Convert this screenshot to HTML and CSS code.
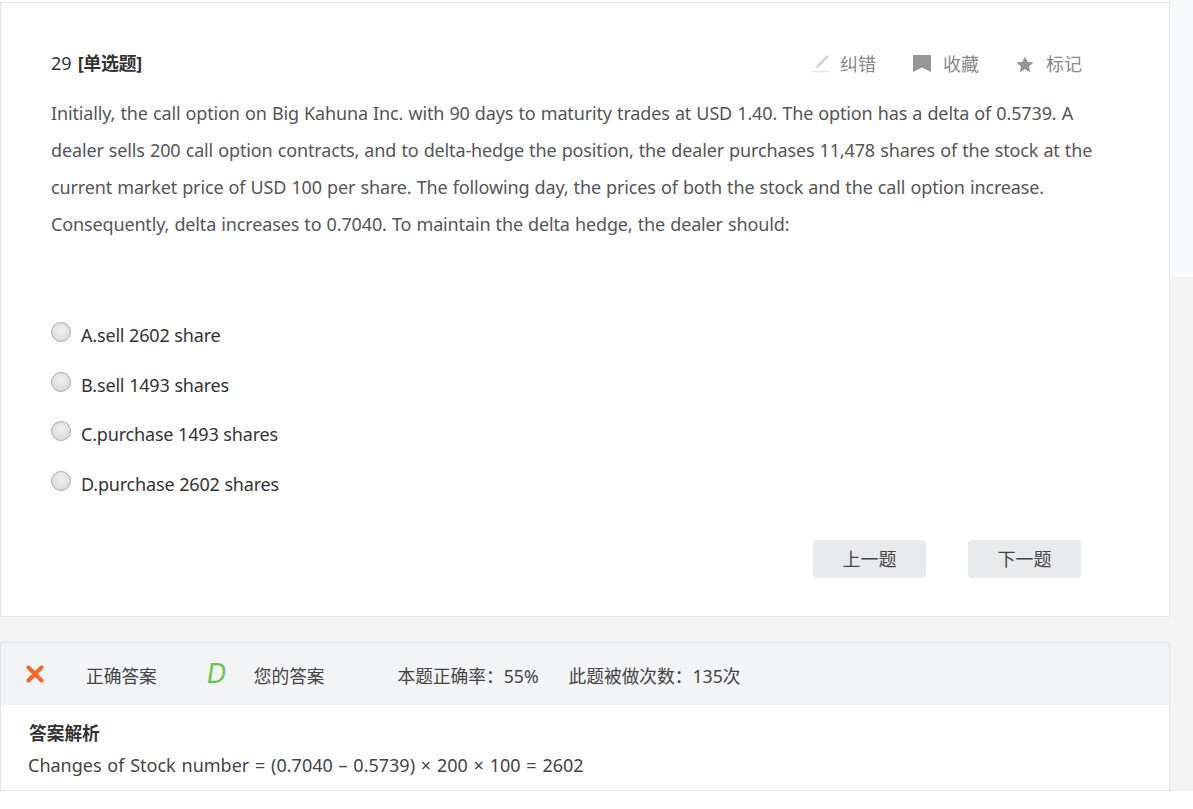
FILE: index.html
```html
<!DOCTYPE html>
<html lang="zh-CN">
<head>
<meta charset="utf-8">
<title>题目</title>
<link rel="stylesheet" href="styles.css">
</head>
<body>
<div class="page">
  <main class="main">
    <section class="card question">
      <header class="q-head">
        <div class="q-num">29 <b>[单选题]</b></div>
        <div class="q-tools">
          <span class="tool tool-fix"><svg class="ico" width="20" height="20" viewBox="0 0 20 20"><path d="M17 2l2 2-10 10-3.800 1.800 1.600-3.800z" fill="#d6d6d6"/><path d="M2 18.500h18" stroke="#e8e8e8" stroke-width="1.600"/></svg>纠错</span>
          <span class="tool tool-fav"><svg class="ico" width="20" height="20" viewBox="0 0 20 20"><path d="M0 2h18v17l-9-4.500-9 4.500z" fill="#969696"/></svg>收藏</span>
          <span class="tool tool-mark"><svg class="ico" width="20" height="20" viewBox="0 0 20 20"><path d="M9 3.500l2.500 5.300 6 .6-4.500 4 1.300 5.800-5.300-3-5.300 3 1.300-5.800-4.500-4 6-.6z" fill="#969696"/></svg>标记</span>
        </div>
      </header>
      <p class="stem">Initially, the call option on Big Kahuna Inc. with 90 days to maturity trades at USD 1.40. The option has a delta of 0.5739. A dealer sells 200 call option contracts, and to delta-hedge the position, the dealer purchases 11,478 shares of the stock at the current market price of USD 100 per share. The following day, the prices of both the stock and the call option increase. Consequently, delta increases to 0.7040. To maintain the delta hedge, the dealer should:</p>
      <ul class="options">
        <li class="option"><span class="radio"></span><span>A.sell 2602 share</span></li>
        <li class="option"><span class="radio"></span><span>B.sell 1493 shares</span></li>
        <li class="option"><span class="radio"></span><span>C.purchase 1493 shares</span></li>
        <li class="option"><span class="radio"></span><span>D.purchase 2602 shares</span></li>
      </ul>
      <div class="nav">
        <button class="btn">上一题</button>
        <button class="btn">下一题</button>
      </div>
    </section>
    <section class="card answer">
      <div class="ans-bar">
        <svg class="ans-x" width="18" height="18" viewBox="0 0 18 18"><path d="M2.500 2.500l13 13M15.500 2.500l-13 13" stroke="#f4672c" stroke-width="4" stroke-linecap="round"/></svg>
        <span class="ans-label">正确答案</span>
        <span class="ans-letter">D</span>
        <span class="ans-label ans-yours">您的答案</span>
        <span class="ans-stat">本题正确率：55%</span>
        <span class="ans-stat ans-count">此题被做次数：135次</span>
      </div>
      <div class="analysis">
        <h3 class="analysis-title">答案解析</h3>
        <p class="analysis-text">Changes of Stock number = (0.7040 – 0.5739) × 200 × 100 = 2602</p>
      </div>
    </section>
  </main>
  <aside class="side"><div class="side-top"></div></aside>
</div>
</body>
</html>
```
FILE: styles.css
```css
* { box-sizing: border-box; }
html, body { margin: 0; padding: 0; background: #fff; }
body {
  font-family: "Noto Sans", "Noto Sans CJK SC", sans-serif;
  color: #333;
  font-size: 18px;
}
.page { display: flex; height: 791px; }
.main {
  width: 1170px;
  padding-top: 2px;
  background: linear-gradient(#fff 2px, #f4f4f4 2px);
  display: flex;
  flex-direction: column;
  gap: 25px;
}
.side { flex: 1; background: #f4f4f4; }
.side-top { height: 277px; background: #f9fafc; }
.card { background: #fff; border: 1px solid #e4e4e4; }
.question { height: 615px; padding: 45px 60px 0 50px; }
.q-head { display: flex; justify-content: space-between; align-items: center; height: 30px; margin-right: 27px; }
.q-num { font-size: 18px; color: #333; margin-bottom: 2px; word-spacing: 1.500px; }
.q-num b { font-weight: 700; letter-spacing: -0.400px; }
.q-tools { display: flex; gap: 37px; color: #888; font-size: 18px; }
.tool { display: flex; align-items: center; gap: 10px; }
.stem { margin: 17px 0 0; font-size: 18px; line-height: 37px; color: #555; letter-spacing: -0.140px; word-spacing: 0.620px; }
.options { list-style: none; margin: 73px 0 0; padding: 0; }
.option { display: flex; height: 49.700px; color: #333; gap: 10px; align-items: flex-start; line-height: 26px; padding-top: 6px; letter-spacing: -0.180px; word-spacing: 0.300px; }
.radio {
  width: 20px; height: 20px; border-radius: 50%;
  border: 1px solid #aaa;
  background: radial-gradient(circle at 50% 40%, #f0f0f0, #d4d4d4);
}
.nav { display: flex; justify-content: flex-end; gap: 42px; margin: 25px 0 0 0; padding-right: 28px; }
.btn {
  width: 113px; height: 38px; border: 0; border-radius: 4px; padding: 0 0 2px;
  background: #e9eaec; color: #444; font: inherit;
}
.answer { height: 149px; }
.ans-bar {
  display: flex; align-items: center; height: 62px; background: #f3f4f6;
  padding: 2px 0 0 25px; font-size: 17.700px; color: #444;
}
.ans-x { margin-top: -2px; }
.ans-label { margin-left: 42px; }
.ans-letter { margin: -3px 0 0 50px; font-family: Inter, sans-serif; font-size: 27px; font-weight: 400; font-style: italic; color: #6cc24a; line-height: 1; width: 20px; }
.ans-yours { margin-left: 27px; }
.ans-stat { margin-left: 73px; }
.ans-count { margin-left: 30px; }
.analysis { padding: 15px 27px; }
.analysis-title { margin: 0 0 0 1px; font-size: 17.700px; font-weight: 700; color: #333; line-height: 26px; }
.analysis-text { margin: 6px 0 0; font-size: 18px; line-height: 26px; color: #444; word-spacing: 1.100px; }
```
